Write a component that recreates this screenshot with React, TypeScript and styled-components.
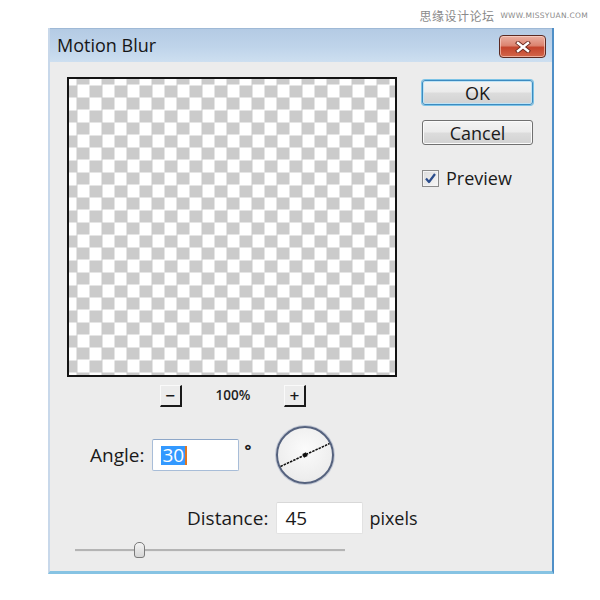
import React from "react";
import styled, { createGlobalStyle } from "styled-components";

const GlobalStyle = createGlobalStyle`
  html, body {
    margin: 0;
    padding: 0;
    background: #ffffff;
  }
  body {
    width: 600px;
    height: 600px;
    overflow: hidden;
    font-family: "Open Sans", "Noto Sans", sans-serif;
  }
`;

const Page = styled.div`
  width: 600px;
  height: 600px;
  display: flex;
  flex-direction: column;
`;

const Watermark = styled.div`
  height: 28px;
  display: flex;
  align-items: center;
  justify-content: flex-end;
  gap: 6px;
  padding-right: 12px;
  padding-top: 2px;
  box-sizing: border-box;
  color: #8a8a8a;

  .cn {
    font-family: "Noto Sans CJK SC", sans-serif;
    font-size: 12px;
    letter-spacing: 0.5px;
  }

  .en {
    font-family: "DejaVu Sans", sans-serif;
    font-size: 7.5px;
    letter-spacing: 0.3px;
  }
`;

const Dialog = styled.div`
  margin-left: 48px;
  width: 506px;
  height: 546px;
  box-sizing: border-box;
  display: flex;
  flex-direction: column;
  border-left: 2px solid #c8d8ea;
  border-right: 2px solid #4f8fc7;
  border-bottom: 3px solid #86c3e3;
  background: #ececec;
`;

const TitleBar = styled.div`
  height: 34px;
  flex: none;
  display: flex;
  align-items: flex-start;
  justify-content: space-between;
  padding: 0 6px 0 7px;
  background: linear-gradient(180deg, #b4cbe4 0%, #bfd4ea 55%, #cddff0 100%);
  border-top: 1px solid #9fb9d6;
  box-sizing: border-box;
`;

const Title = styled.span`
  font-size: 18px;
  color: #161616;
  line-height: 33px;
`;

const CloseButton = styled.div`
  margin-top: 6px;
  width: 47px;
  height: 23px;
  box-sizing: border-box;
  border: 1px solid #5b2a22;
  border-radius: 4px;
  background: linear-gradient(180deg, #eab0a2 0%, #dc8470 45%, #c4442c 55%, #d2664a 100%);
  display: flex;
  align-items: center;
  justify-content: center;
  box-shadow: inset 0 0 0 1px rgba(255, 220, 210, 0.6);
`;

const Body = styled.div`
  flex: 1;
  display: flex;
  flex-direction: column;
  padding: 15px 0 0 17px;
`;

const TopSection = styled.div`
  display: flex;
  gap: 25px;
`;

const PreviewColumn = styled.div`
  display: flex;
  flex-direction: column;
  width: 330px;
`;

const PreviewBox = styled.div`
  width: 330px;
  height: 300px;
  box-sizing: border-box;
  border: 2px solid #141414;
  background-color: #ffffff;
  background-image: conic-gradient(
    #cbcbcb 25%,
    #ffffff 0 50%,
    #cbcbcb 0 75%,
    #ffffff 0
  );
  background-size: 25px 25px;
  background-position: -4.5px -6.5px;
`;

const ZoomRow = styled.div`
  margin-top: 8px;
  height: 22px;
  display: flex;
  align-items: center;
  justify-content: center;
  gap: 31px;
  padding-left: 2px;
`;

const ZoomButton = styled.div`
  width: 22px;
  height: 22px;
  box-sizing: border-box;
  border-right: 2px solid #1a1a1a;
  border-bottom: 2px solid #1a1a1a;
  border-left: 1px solid #fafafa;
  border-top: 1px solid #fafafa;
  display: flex;
  align-items: center;
  justify-content: center;
  font-family: "DejaVu Sans", sans-serif;
  font-weight: bold;
  font-size: 13px;
  color: #1a1a1a;
`;

const ZoomLabel = styled.span`
  font-size: 13.5px;
  font-weight: 600;
  color: #1e1e1e;
  width: 40px;
  text-align: center;
  margin-top: -3px;
`;

const SideColumn = styled.div`
  width: 111px;
  padding-top: 3px;
  display: flex;
  flex-direction: column;
`;

const PushButton = styled.div<{ $focused?: boolean }>`
  height: 25px;
  box-sizing: border-box;
  border-radius: 3px;
  border: 1px solid ${(p) => (p.$focused ? "#3d8bc0" : "#707070")};
  box-shadow: ${(p) =>
    p.$focused
      ? "0 0 0 1px #7cc3e6, inset 0 0 0 1px #bfe4f6"
      : "inset 0 0 0 1px #fbfbfb"};
  background: linear-gradient(180deg, #f3f3f3 0%, #ebebeb 48%, #dcdcdc 52%, #d2d2d2 100%);
  display: flex;
  align-items: center;
  justify-content: center;
  font-size: 18px;
  color: #1a1a1a;
  & + & {
    margin-top: 15px;
  }
`;

const CheckRow = styled.label`
  margin-top: 21px;
  display: flex;
  align-items: center;
  gap: 7px;
  font-size: 18px;
  color: #1a1a1a;
`;

const CheckBox = styled.span`
  width: 17px;
  height: 17px;
  box-sizing: border-box;
  border: 1px solid #8b8b8b;
  background: linear-gradient(135deg, #dcdcdc 0%, #f7f7f7 100%);
  display: flex;
  align-items: center;
  justify-content: center;
  box-shadow: inset 0 0 0 1px #f4f4f4;
`;

const AngleRow = styled.div`
  margin-top: 19px;
  height: 58px;
  display: flex;
  align-items: center;
  padding-left: 23px;
`;

const FieldLabel = styled.span`
  font-size: 19px;
  color: #1a1a1a;
`;

const TextField = styled.div<{ $focused?: boolean }>`
  width: 87px;
  height: 32px;
  box-sizing: border-box;
  margin-left: 8px;
  background: #ffffff;
  border: 1px solid ${(p) => (p.$focused ? "#a8bdd8" : "#e2e2e2")};
  border-top-color: ${(p) => (p.$focused ? "#8ea7c8" : "#d8d8d8")};
  border-radius: 2px;
  display: flex;
  align-items: center;
  padding-left: 8px;
  font-size: 19px;
  color: #1a1a1a;
`;

const Selected = styled.span`
  background: #3399ff;
  color: #ffffff;
  line-height: 19px;
  padding: 0 1px;
  border-right: 2px solid #e3761e;
`;

const Degree = styled.span`
  margin-left: 5px;
  margin-top: -10px;
  font-size: 16px;
  font-weight: bold;
  color: #1a1a1a;
`;

const Dial = styled.div`
  margin-left: 25px;
  width: 58px;
  height: 58px;
  box-sizing: border-box;
  border-radius: 50%;
  border: 2px solid #55627e;
  background: radial-gradient(circle at 50% 40%, #fbfbfb 0%, #ededed 70%, #dcdcdc 100%);
  box-shadow: 0 0 0 1px #c3c9d6;
  display: flex;
  align-items: center;
  justify-content: center;
`;

const DistanceRow = styled.div`
  margin-top: 18px;
  height: 32px;
  display: flex;
  align-items: center;
  padding-left: 120px;
`;

const Unit = styled.span`
  margin-left: 6px;
  font-size: 18px;
  color: #1a1a1a;
`;

const SliderRow = styled.div`
  margin-top: 8px;
  height: 16px;
  width: 270px;
  margin-left: 8px;
  display: flex;
  align-items: center;
  position: relative;
`;

const Track = styled.div`
  flex: 1;
  height: 2px;
  background: #b4b4b4;
  border-bottom: 1px solid #e6e6e6;
`;

const Thumb = styled.div`
  position: absolute;
  left: 59px;
  top: 0;
  width: 11px;
  height: 16px;
  box-sizing: border-box;
  border: 1px solid #7a7a7a;
  border-radius: 5px 5px 3px 3px;
  background: linear-gradient(180deg, #f4f4f4 0%, #d6d6d6 100%);
`;

const CloseIcon = () => (
  <svg width="16" height="12" viewBox="0 0 16 12">
    <path
      d="M3 2 L13 10 M13 2 L3 10"
      stroke="#6b2a20"
      strokeWidth="4.2"
      strokeLinecap="square"
    />
    <path
      d="M3 2 L13 10 M13 2 L3 10"
      stroke="#ffffff"
      strokeWidth="2.4"
      strokeLinecap="square"
    />
  </svg>
);

const CheckIcon = () => (
  <svg width="13" height="13" viewBox="0 0 13 13">
    <path
      d="M2 6.5 L5 10 L11 2"
      fill="none"
      stroke="#2b4d8c"
      strokeWidth="2.2"
      strokeLinejoin="round"
    />
  </svg>
);

const DialLine = ({ angle }: { angle: number }) => {
  const r = 27;
  const rad = (angle * Math.PI) / 180;
  const dx = r * Math.cos(rad);
  const dy = r * Math.sin(rad);
  return (
    <svg width="54" height="54" viewBox="-27 -27 54 54">
      <line
        x1={-dx}
        y1={dy}
        x2={dx}
        y2={-dy}
        stroke="#111"
        strokeWidth="1.6"
        strokeDasharray="2.5 1"
      />
      <rect x="-2" y="-2" width="4" height="4" fill="#111" transform={`rotate(${-angle})`} />
    </svg>
  );
};

const App: React.FC = () => {
  const angle = 25;

  return (
    <Page>
      <GlobalStyle />
      <Watermark>
        <span className="cn">思缘设计论坛</span>
        <span className="en">WWW.MISSYUAN.COM</span>
      </Watermark>
      <Dialog>
        <TitleBar>
          <Title>Motion Blur</Title>
          <CloseButton>
            <CloseIcon />
          </CloseButton>
        </TitleBar>
        <Body>
          <TopSection>
            <PreviewColumn>
              <PreviewBox />
              <ZoomRow>
                <ZoomButton>−</ZoomButton>
                <ZoomLabel>100%</ZoomLabel>
                <ZoomButton>+</ZoomButton>
              </ZoomRow>
            </PreviewColumn>
            <SideColumn>
              <PushButton $focused>OK</PushButton>
              <PushButton>Cancel</PushButton>
              <CheckRow>
                <CheckBox>
                  <CheckIcon />
                </CheckBox>
                Preview
              </CheckRow>
            </SideColumn>
          </TopSection>
          <AngleRow>
            <FieldLabel>Angle:</FieldLabel>
            <TextField $focused>
              <Selected>30</Selected>
            </TextField>
            <Degree>°</Degree>
            <Dial>
              <DialLine angle={angle} />
            </Dial>
          </AngleRow>
          <DistanceRow>
            <FieldLabel>Distance:</FieldLabel>
            <TextField>45</TextField>
            <Unit>pixels</Unit>
          </DistanceRow>
          <SliderRow>
            <Track />
            <Thumb />
          </SliderRow>
        </Body>
      </Dialog>
    </Page>
  );
};

export default App;
